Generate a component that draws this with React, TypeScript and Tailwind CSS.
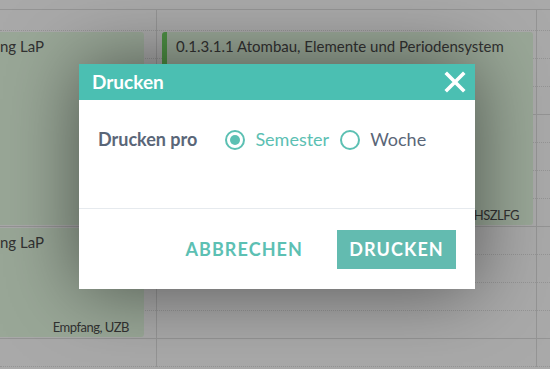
import { useState } from "react"

const gridRows: Array<{ h: string; solid: boolean }> = [
  { h: "h-[21px]", solid: false },
  { h: "h-[28px]", solid: false },
  { h: "h-[28px]", solid: false },
  { h: "h-[28px]", solid: true },
  { h: "h-[28px]", solid: false },
  { h: "h-[28px]", solid: false },
  { h: "h-[28px]", solid: false },
  { h: "h-[28px]", solid: true },
  { h: "h-[28px]", solid: false },
  { h: "h-[28px]", solid: false },
  { h: "h-[28px]", solid: false },
  { h: "h-[28px]", solid: true },
  { h: "h-[28px]", solid: false },
]

function GridColumn({ className }: { className: string }) {
  return (
    <div className={className}>
      {gridRows.map((r, i) => (
        <div key={i} className={`${r.h} border-b ${r.solid ? "border-solid" : "border-dotted"} border-[#d4d4d4]`} />
      ))}
    </div>
  )
}

function Radio({ checked, label, onClick }: { checked: boolean; label: string; onClick: () => void }) {
  return (
    <button type="button" onClick={onClick} className="flex items-center gap-[10px]">
      <span className="flex h-[20px] w-[20px] items-center justify-center rounded-full border-2 border-[#5cc0b3]">
        {checked && <span className="h-[10px] w-[10px] rounded-full bg-[#5cc0b3]" />}
      </span>
      <span className={checked ? "text-[18px] text-[#5cc0b3]" : "text-[18px] text-[#5a6678]"}>{label}</span>
    </button>
  )
}

export default function App() {
  const [mode, setMode] = useState<"semester" | "woche">("semester")

  return (
    <div className="relative h-[369px] w-[550px] overflow-hidden bg-[#f2f2f2] font-['Lato',sans-serif]">
      {/* calendar grid */}
      <div className="h-[10px] border-b border-[#d4d4d4]" />
      <div className="flex">
        <GridColumn className="w-[157px] border-r border-[#d4d4d4]" />
        <GridColumn className="w-[380px] border-r border-[#d4d4d4]" />
        <GridColumn className="flex-1" />
      </div>

      {/* events */}
      <div className="absolute left-0 top-[32px] h-[193px] w-[144px] rounded-r-[3px] bg-[#dcf0d8] pt-[3px] text-[15px] text-[#484848]">
        ng LaP
      </div>
      <div className="absolute left-0 top-[228px] flex h-[109px] w-[144px] flex-col justify-between rounded-r-[3px] bg-[#dcf0d8] pr-[15px] pt-[3px] text-[15px] text-[#484848]">
        <span>ng LaP</span>
        <span className="self-end text-[13px] tracking-[-0.5px]">Empfang, UZB</span>
      </div>
      <div className="absolute left-[162px] top-[32px] flex h-[193px] w-[371px] flex-col justify-between rounded-[3px] border-l-[5px] border-[#6fce62] bg-[#dcf0d8] pl-[9px] pr-[14px] pt-[3px] text-[15px] text-[#484848]">
        <span>0.1.3.1.1 Atombau, Elemente und Periodensystem</span>
        <span className="self-end text-[13px] tracking-[-0.5px]">Chemie, HSZLFG</span>
      </div>

      {/* overlay + dialog */}
      <div className="absolute inset-0 flex items-center justify-center bg-black/30 pb-[16px] pl-[4px]">
        <div className="w-[396px] bg-white shadow-[0_0_70px_rgba(0,0,0,0.5)]">
          <div className="flex h-[36px] items-center justify-between bg-[#4bbfb2] pl-[13px] pr-[9px]">
            <span className="text-[19px] font-bold text-white">Drucken</span>
            <svg width="22" height="22" viewBox="0 0 22 22" fill="none">
              <path d="M3 3L19 19M19 3L3 19" stroke="white" strokeWidth="3.6" strokeLinecap="square" />
            </svg>
          </div>
          <div className="flex h-[109px] items-start border-b border-[#e6eaee] pl-[19px] pt-[26px]">
            <span className="mr-[28px] text-[18px] font-bold text-[#5a6678]">Drucken pro</span>
            <div className="flex items-center gap-[11px]">
              <Radio checked={mode === "semester"} label="Semester" onClick={() => setMode("semester")} />
              <Radio checked={mode === "woche"} label="Woche" onClick={() => setMode("woche")} />
            </div>
          </div>
          <div className="flex h-[80px] items-center justify-end gap-[34px] pr-[19px]">
            <button type="button" className="text-[18px] font-bold tracking-[0.06em] text-[#5cc0b3]">
              ABBRECHEN
            </button>
            <button type="button" className="h-[39px] w-[119px] bg-[#63bbb0] text-[18px] font-bold tracking-[0.06em] text-white">
              DRUCKEN
            </button>
          </div>
        </div>
      </div>
    </div>
  )
}
